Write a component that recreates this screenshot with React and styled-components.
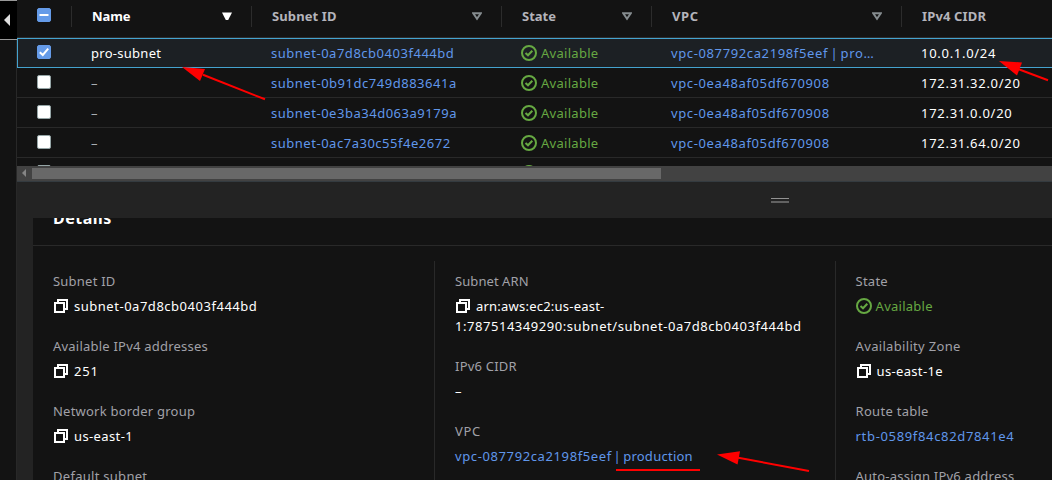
import React from "react";
import styled, { createGlobalStyle, css } from "styled-components";

const Global = createGlobalStyle`
  *, *::before, *::after { box-sizing: border-box; }
  body { margin: 0; background: #131313; overflow: hidden; }
`;

const Page = styled.div`
  position: relative;
  display: flex;
  width: 1052px;
  height: 480px;
  overflow: hidden;
  background: #131313;
  color: #fff;
  font: 400 13px/20px "Noto Sans", sans-serif;
`;
const Rail = styled.aside`
  flex: none;
  width: 17px;
  border-right: 1px solid #282828;
`;
const RailToggle = styled.button`
  display: flex;
  align-items: center;
  justify-content: flex-end;
  width: 17px;
  height: 40px;
  padding: 0 7px 0 0;
  border: solid #989898;
  border-width: 1px 0;
  background: #000;
`;
const Main = styled.main`
  flex: none;
  width: 1035px;
  display: flex;
  flex-direction: column;
`;
const TableView = styled.section`
  height: 166px;
  overflow: hidden;
`;
const columns = "55px 180px 250px 150px 250px 150px";
const HeaderRow = styled.div`
  display: grid;
  grid-template-columns: ${columns};
  height: 38px;
  padding-top: 6px;
  border-bottom: 1px solid #2c2c2c;
`;
const HeaderCell = styled.div`
  display: flex;
  align-items: center;
  justify-content: space-between;
  height: 21px;
  padding: 0 19px 2px 20px;
  border-right: 1px solid #2c2c2c;
  color: ${(p) => (p.$active ? "#fff" : "#b4b4bb")};
  font-weight: 700;
  letter-spacing: ${(p) => p.$spacing || 0}px;
  white-space: nowrap;
  svg { margin-top: 1px; }
  &:first-child { padding: 2px 0 0 20px; align-items: flex-start; }
  &:first-child svg { margin-top: -1px; }
  &:last-child { border-right: 0; }
`;
const Row = styled.div`
  display: grid;
  grid-template-columns: 54px 180px 250px 150px 250px 151px;
  height: 30px;
  border-bottom: 1px solid #292929;
  ${(p) => p.$selected && css`
    background: #1c2024;
    border: solid #44a3cf;
    border-width: 1px 0 1px 1px;
    grid-template-columns: 53px 180px 250px 150px 250px 151px;
  `}
`;
const Cell = styled.div`
  display: flex;
  gap: 4px;
  height: 29px;
  padding: ${(p) => (p.$selected ? 4 : 5)}px 20px 0;
  overflow: hidden;
  white-space: pre;
  color: ${(p) => p.$color || "#fff"};
  letter-spacing: ${(p) => p.$spacing || 0}px;
  word-spacing: ${(p) => p.$word || 0}px;
`;
const CheckCell = styled.div`
  padding: ${(p) => (p.$selected ? "6px 0 0 19px" : "7px 0 0 20px")};
`;
const Box = styled.span`
  display: block;
  width: 14px;
  height: 14px;
  border-radius: 2px;
  background: ${(p) => (p.$on ? "#659be8" : "#fff")};
  border: 1px solid ${(p) => (p.$on ? "#659be8" : "#95a5a6")};
  svg { display: block; margin: -1px; }
`;
const ScrollBar = styled.div`
  display: flex;
  align-items: center;
  height: 16px;
  padding: 0 0 1px 5px;
  gap: 6px;
  background: #424242;
  border-bottom: 1px solid #343b40;
`;
const Thumb = styled.div`
  width: 629px;
  height: 11px;
  background: #686868;
`;
const Splitter = styled.div`
  display: flex;
  align-items: flex-start;
  height: 36px;
  padding: 16px 0 0 754px;
  background: #232323;
`;
const DetailsFrame = styled.section`
  flex: 1;
  min-height: 0;
  display: flex;
  padding-left: 16px;
  background: #232323;
`;
const Details = styled.div`
  width: 1019px;
  background: #131313;
  overflow: hidden;
`;
const DetailsHeading = styled.header`
  height: 28px;
  overflow: hidden;
  border-bottom: 1px solid #292929;
  h2 {
    margin: -11px 0 0 20px;
    font: 700 16px/22px "Noto Sans", sans-serif;
    letter-spacing: 0.5px;
  }
`;
const DetailColumns = styled.div`
  display: grid;
  grid-template-columns: 402px 401px 216px;
  padding-top: 15px;
`;
const DetailColumn = styled.div`
  display: flex;
  flex-direction: column;
  gap: 20px;
  height: 260px;
  padding: 10px 20px 0;
  border-right: 1px solid #292929;
  &:last-child { border-right: 0; padding-left: 19.6px; }
`;
const Label = styled.div`
  height: 20px;
  margin-bottom: 5px;
  color: #a1a1a8;
  white-space: nowrap;
  letter-spacing: ${(p) => p.$spacing ?? 0.22}px;
`;
const Value = styled.div`
  min-height: 20px;
  white-space: nowrap;
  color: ${(p) => p.$color || "#fff"};
  letter-spacing: ${(p) => p.$spacing || 0}px;
  word-spacing: ${(p) => p.$word || 0}px;
  svg { vertical-align: -3px; margin-right: ${(p) => p.$gap || 5}px; }
`;
const Tracked = styled.span`
  letter-spacing: ${(p) => p.$spacing}px;
`;
const Annotations = styled.svg`
  position: absolute;
  inset: 0;
  pointer-events: none;
`;

const blue = "#6097eb";
const green = "#66a842";

const CheckMark = () => (
  <svg width="14" height="14"><path d="M2.8 7.2 5.8 10 11.2 3.6" fill="none" stroke="#fff" strokeWidth="2" /></svg>
);
const MinusMark = () => (
  <svg width="14" height="14"><path d="M2.5 7H11.5" stroke="#fff" strokeWidth="2" /></svg>
);
const SortArrow = ({ filled }) => (
  <svg width="10" height="9">
    <path d={filled ? "M0 0.5H10L6.2 8H3.8Z" : "M1.2 1.3H8.8L5 6.9Z"} fill={filled ? "#fff" : "none"} stroke={filled ? "none" : "#858c8f"} strokeWidth="1.9" />
  </svg>
);
const StatusSvg = styled.svg`
  flex: none;
`;
const StatusIcon = () => (
  <StatusSvg width="16" height="16" fill="none" stroke={green} strokeWidth="2">
    <circle cx="8" cy="8" r="7" /><path d="M4.5 8 7 10.3 11.3 5.7" />
  </StatusSvg>
);
const CopyIcon = () => (
  <svg width="16" height="16" fill="none" stroke="#fff" strokeWidth="2">
    <path d="M2 5H11V14H2Z M5 5V2H14V11H11" />
  </svg>
);

const StatusCell = styled(Cell)`
  svg { margin-top: 2px; }
`;

const rows = [
  ["pro-subnet", "subnet-0a7d8cb0403f444bd", "vpc-087792ca2198f5eef | pro…", "10.0.1.0/24"],
  ["–", "subnet-0b91dc749d883641a", "vpc-0ea48af05df670908", "172.31.32.0/20"],
  ["–", "subnet-0e3ba34d063a9179a", "vpc-0ea48af05df670908", "172.31.0.0/20"],
  ["–", "subnet-0ac7a30c55f4e2672", "vpc-0ea48af05df670908", "172.31.64.0/20"],
  ["–", "", "", ""],
];

const TableRow = ({ data, selected }) => (
  <Row $selected={selected}>
    <CheckCell $selected={selected}><Box $on={selected}>{selected && <CheckMark />}</Box></CheckCell>
    <Cell $selected={selected} $spacing={0.28} $color={selected ? "#fff" : "#a8adb3"}>{data[0]}</Cell>
    <Cell $selected={selected} $spacing={0.52} $color={blue}>{data[1]}</Cell>
    <StatusCell $selected={selected} $spacing={0.28} $color={green}><StatusIcon />Available</StatusCell>
    <Cell $selected={selected} $spacing={0.62} $word={-1.6} $color={blue}>{data[2]}</Cell>
    <Cell $selected={selected} $spacing={0.71}>{data[3]}</Cell>
  </Row>
);

const Field = ({ label, track, children, ...rest }) => (
  <div><Label $spacing={track}>{label}</Label><Value {...rest}>{children}</Value></div>
);

export default function App() {
  return (
    <Page>
      <Global />
      <Rail>
        <RailToggle aria-label="Expand">
          <svg width="6" height="12"><path d="M6 0V12L0 6Z" fill="#ddd" /></svg>
        </RailToggle>
      </Rail>
      <Main>
        <TableView>
          <HeaderRow>
            <HeaderCell><Box $on><MinusMark /></Box></HeaderCell>
            <HeaderCell $active $spacing={-0.1}>Name<SortArrow filled /></HeaderCell>
            <HeaderCell $spacing={0.1}>Subnet ID<SortArrow /></HeaderCell>
            <HeaderCell>State<SortArrow /></HeaderCell>
            <HeaderCell $spacing={0.6}>VPC<SortArrow /></HeaderCell>
            <HeaderCell $spacing={0.15}>IPv4 CIDR</HeaderCell>
          </HeaderRow>
          {rows.map((r, i) => <TableRow key={i} data={r} selected={i === 0} />)}
        </TableView>
        <ScrollBar>
          <svg width="4" height="8"><path d="M4 0V8L0 4Z" fill="#858585" /></svg>
          <Thumb />
        </ScrollBar>
        <Splitter>
          <svg width="18" height="5"><path d="M0 .5H18" stroke="#929292" /><path d="M0 4H18" stroke="#626262" strokeWidth="2" /></svg>
        </Splitter>
        <DetailsFrame>
          <Details>
            <DetailsHeading><h2>Details</h2></DetailsHeading>
            <DetailColumns>
              <DetailColumn>
                <Field label="Subnet ID" $spacing={0.52}><CopyIcon />subnet-0a7d8cb0403f444bd</Field>
                <Field label="Available IPv4 addresses" $spacing={0.8}><CopyIcon />251</Field>
                <Field label="Network border group" $spacing={0.38}><CopyIcon />us-east-1</Field>
                <Field label="Default subnet" track={0.28} />
              </DetailColumn>
              <DetailColumn>
                <Field label="Subnet ARN" track={0.07} $spacing={0.54}>
                  <CopyIcon /><Tracked $spacing={0.22}>arn:aws:ec2:us-east-</Tracked><br />1:787514349290:subnet/subnet-0a7d8cb0403f444bd
                </Field>
                <Field label="IPv6 CIDR">–</Field>
                <Field label="VPC" track={0.7} $color={blue} $spacing={0.61} $word={-2.2}>
                  vpc-087792ca2198f5eef | <Tracked $spacing={0.26}>production</Tracked>
                </Field>
              </DetailColumn>
              <DetailColumn>
                <Field label="State" $color={green} $gap={4} $spacing={0.26}><StatusIcon />Available</Field>
                <Field label="Availability Zone" track={0.32} $spacing={0.33}><CopyIcon />us-east-1e</Field>
                <Field label="Route table" track={0.28} $color={blue} $spacing={0.66}>rtb-0589f84c82d7841e4</Field>
                <Field label="Auto-assign IPv6 address" />
              </DetailColumn>
            </DetailColumns>
          </Details>
        </DetailsFrame>
      </Main>
      <Annotations width="1052" height="480" fill="#f00" stroke="#f00">
        <path d="M203 74.8 265 99.3" strokeWidth="2" />
        <path d="M182 67 205 69 200 81Z" stroke="none" />
        <path d="M1018 69 1048 80.3" strokeWidth="2" />
        <path d="M999 61 1022 62.5 1017 75.5Z" stroke="none" />
        <path d="M737 457.5 809 471" strokeWidth="2" />
        <path d="M717 454.5 740 451.3 737.5 464.5Z" stroke="none" />
        <path d="M616 470H700" strokeWidth="2" />
      </Annotations>
    </Page>
  );
}
